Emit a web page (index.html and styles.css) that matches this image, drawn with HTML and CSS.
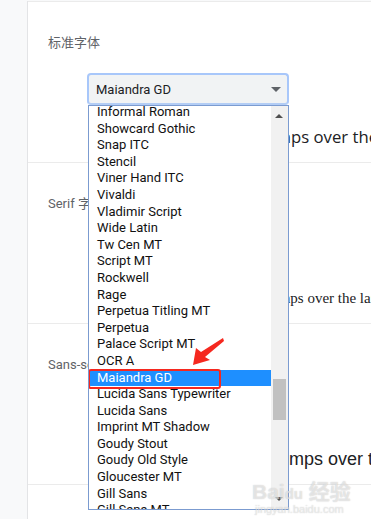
FILE: index.html
```html
<!DOCTYPE html>
<html lang="zh-CN">
<head>
    <meta charset="UTF-8">
    <title>自定义字体</title>
    <link rel="stylesheet" href="styles.css">
</head>
<body>
    <div class="page">
        <div class="side"></div>
        <div class="card">
            <div class="font-section">
                <div class="font-label">标准字体</div>
                <div class="select-wrap">
                    <div class="font-select focused">
                        <span>Maiandra GD</span>
                        <span class="select-arrow"></span>
                    </div>

                    <!-- open dropdown -->
                    <div class="dropdown">
                        <ul class="font-list">
                            <li>Informal Roman</li>
                            <li>Showcard Gothic</li>
                            <li>Snap ITC</li>
                            <li>Stencil</li>
                            <li>Viner Hand ITC</li>
                            <li>Vivaldi</li>
                            <li>Vladimir Script</li>
                            <li>Wide Latin</li>
                            <li>Tw Cen MT</li>
                            <li>Script MT</li>
                            <li>Rockwell</li>
                            <li>Rage</li>
                            <li>Perpetua Titling MT</li>
                            <li>Perpetua</li>
                            <li>Palace Script MT</li>
                            <li>OCR A</li>
                            <li class="selected">Maiandra GD</li>
                            <li>Lucida Sans Typewriter</li>
                            <li>Lucida Sans</li>
                            <li>Imprint MT Shadow</li>
                            <li>Goudy Stout</li>
                            <li>Goudy Old Style</li>
                            <li>Gloucester MT</li>
                            <li>Gill Sans</li>
                            <li>Gill Sans MT</li>
                            <li>Futura</li>
                        </ul>
                        <div class="scrollbar">
                            <span class="sb-up"></span>
                            <span class="sb-thumb"></span>
                            <span class="sb-down"></span>
                        </div>
                        <div class="mark-box"></div>
                    </div>
                </div>
                <div class="sample sample-sans">The quick brown fox jumps over the lazy dog</div>
            </div>

            <div class="font-section">
                <div class="font-label">Serif 字体</div>
                <div class="font-select"><span>Times New Roman</span></div>
                <div class="sample sample-serif">The quick brown fox jumps over the lazy dog</div>
            </div>

            <div class="font-section">
                <div class="font-label">Sans-serif 字体</div>
                <div class="font-select"><span>Arial</span></div>
                <div class="sample sample-large">The quick brown fox jumps over the lazy dog</div>
            </div>

            <div class="font-section">
                <div class="font-label">宽度固定的字体</div>
            </div>
        </div>
    </div>

    <svg class="red-arrow" width="40" height="40" viewBox="0 0 40 40">
        <polygon points="3,35 6,18 11,22 33,8 34,11 15,27 20,30" fill="#f5281f"/>
    </svg>

    <div class="watermark">
        <div class="wm-logo">Bai<span class="wm-du">du</span> 经验</div>
        <div class="wm-url">jingyan.baidu.com</div>
    </div>
</body>
</html>
```

FILE: styles.css
```css
* {
    margin: 0;
    padding: 0;
    box-sizing: border-box;
}
body {
    font-family: Roboto, "Noto Sans CJK SC", sans-serif;
    background: #f8f9fa;
    color: #202124;
    width: 371px;
    height: 519px;
    overflow: hidden;
    position: relative;
}
.page {
    display: flex;
    height: 519px;
}
.side {
    width: 27px;
    flex-shrink: 0;
}
.card {
    flex: 1;
    background: white;
    border-left: 1px solid #e3e4e6;
    margin-top: 1px;
    overflow: hidden;
}
.font-section {
    border-top: 1px solid #ebebeb;
    padding: 32px 0 15px 20px;
    height: 161px;
}
.font-label {
    font-size: 13px;
    line-height: 18px;
    color: #5f6368;
    white-space: nowrap;
}
.select-wrap {
    position: relative;
    margin-top: 21px;
    margin-left: 39px;
    width: 202px;
}
.font-select {
    width: 200px;
    height: 32px;
    margin: 21px 0 0 40px;
    background: #f1f3f4;
    border-radius: 4px;
    font-size: 13px;
    display: flex;
    align-items: center;
    padding-left: 8px;
}
.font-select.focused {
    width: 202px;
    margin: 0;
    border: 2px solid #a8c7fa;
    border-bottom-color: #b3cdf5;
    padding: 0 6px 0 7px;
    justify-content: space-between;
}
.select-arrow {
    width: 0;
    height: 0;
    border-left: 5px solid transparent;
    border-right: 5px solid transparent;
    border-top: 5px solid #5f6368;
}
.sample {
    margin-top: 22px;
    white-space: nowrap;
    color: #202124;
    line-height: 20px;
}
.sample-sans {
    font-family: "Open Sans", sans-serif;
    font-size: 16.7px;
    margin-left: 51px;
}
.sample-serif {
    font-family: "Liberation Serif", serif;
    font-size: 15px;
    margin-left: 89px;
}
.sample-large {
    font-family: "Liberation Sans", Arial, sans-serif;
    font-size: 18px;
    margin-left: 61px;
}

/* dropdown popup over the page */
.dropdown {
    position: absolute;
    top: 32px;
    left: 1px;
    width: 201px;
    height: 405px;
    background: white;
    border: 1px solid #7b9bd0;
    overflow: hidden;
    z-index: 5;
}
.font-list {
    list-style: none;
    margin-top: -2px;
    margin-right: 17px;
    font-size: 13px;
    color: #111;
}
.font-list li {
    height: 16.6px;
    line-height: 16.6px;
    padding-left: 8px;
    white-space: nowrap;
}
.font-list li.selected {
    background: #1e8fff;
    color: white;
}
.scrollbar {
    position: absolute;
    top: 0;
    right: 0;
    width: 17px;
    height: 100%;
    background: #f1f1f1;
}
.sb-up, .sb-down {
    position: absolute;
    left: 4px;
    width: 0;
    height: 0;
    border-left: 4px solid transparent;
    border-right: 4px solid transparent;
}
.sb-up {
    top: 8px;
    border-bottom: 4px solid #505050;
}
.sb-down {
    bottom: 8px;
    border-top: 4px solid #505050;
}
.sb-thumb {
    position: absolute;
    top: 273px;
    left: 2px;
    width: 13px;
    height: 41px;
    background: #c1c1c1;
}
.mark-box {
    position: absolute;
    top: 263px;
    left: -1px;
    width: 133px;
    height: 20px;
    border: 2px solid #f5281f;
    border-radius: 3px;
}
.red-arrow {
    position: absolute;
    left: 190px;
    top: 330px;
    z-index: 6;
}
.watermark {
    position: absolute;
    left: 252px;
    top: 481px;
    z-index: 7;
    color: rgba(255,255,255,0.55);
    text-shadow: 0 0 1px rgba(120,120,120,0.45);
    font-family: "Liberation Sans", "Noto Sans CJK SC", sans-serif;
    line-height: 1;
}
.wm-logo {
    font-size: 21px;
    font-weight: bold;
}
.wm-du {
    font-size: 15px;
}
.wm-url {
    font-size: 11px;
    margin-top: 2px;
    margin-left: 3px;
}
```
